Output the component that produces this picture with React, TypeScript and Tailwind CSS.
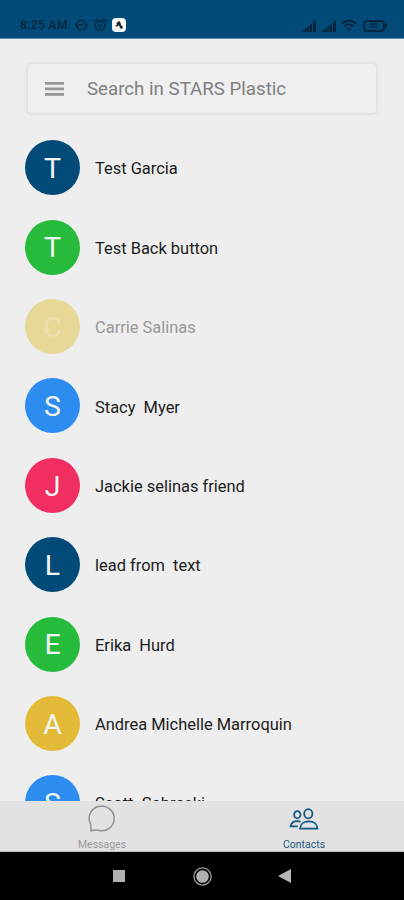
import React from "react";

interface Contact {
  name: string;
  color: string;
  disabled?: boolean;
}

const contacts: Contact[] = [
  { name: "Test Garcia", color: "bg-[#024b78]" },
  { name: "Test Back button", color: "bg-[#26bb3b]" },
  { name: "Carrie Salinas", color: "bg-[#e8d898]", disabled: true },
  { name: "Stacy  Myer", color: "bg-[#2d8cf0]" },
  { name: "Jackie selinas friend", color: "bg-[#f02e61]" },
  { name: "lead from  text", color: "bg-[#024b78]" },
  { name: "Erika  Hurd", color: "bg-[#26bb3b]" },
  { name: "Andrea Michelle Marroquin", color: "bg-[#e3ba37]" },
  { name: "Scott  Sobreski", color: "bg-[#2d8cf0]" },
];

const Signal = () => (
  <svg className="h-[12px] w-[15px]" viewBox="0 0 15 12" fill="currentColor">
    <path d="M0 12 5 8.500V12zM5.500 8 8 6v6H5.500zM8.500 5.500 11 3.500V12H8.500zM12 2.500 15 0v12h-3z" />
  </svg>
);

const StatusBar = () => (
  <div className="flex h-[39px] shrink-0 items-end border-b border-[#5d8aa5] bg-[#024b78] pr-[17px] pb-[6px] pl-[20px] text-[#07263d]">
    <span className="w-[55px] text-[12px] leading-[14px] font-medium whitespace-nowrap tracking-[0.4px]">
      8:25 AM
    </span>
    <svg className="h-[14px] w-[13px]" viewBox="0 0 13 14" fill="none" stroke="currentColor" strokeWidth="1.4">
      <circle cx="6.500" cy="7" r="4.800" />
      <path d="M0 7h3M10 7h3M4.500 7h3l1.500-2" />
    </svg>
    <svg className="ml-[5px] h-[14px] w-[14px]" viewBox="0 0 14 14" fill="none" stroke="currentColor" strokeWidth="1.4">
      <circle cx="7" cy="7.500" r="4.800" />
      <path d="M1 3.500 4 1M10 1l3 2.500M5 7l2 1.500L9 6" />
    </svg>
    <div className="ml-[5px] flex h-[14px] w-[14px] items-center justify-center rounded-[4px] bg-[#f6f8fa]">
      <svg className="h-[8px] w-[8px]" viewBox="0 0 8 8" fill="#202226">
        <path d="M1.500 2 4 0l1.500 1.500L6 4l2 2-1 2-2-1-1-3-1.500 1.500L0 5l2-1.500z" />
      </svg>
    </div>
    <div className="ml-auto flex items-center">
      <Signal />
      <div className="w-[5px]" />
      <Signal />
      <svg className="ml-[5px] h-[13px] w-[16px]" viewBox="0 0 16 13" fill="none" stroke="currentColor" strokeWidth="1.900">
        <path d="M1 4.500c4-3.800 10-3.800 14 0M3.500 7.300c2.700-2.500 6.300-2.500 9 0" />
        <path d="m5.500 9.300 2.500 2.500 2.500-2.500c-1.500-1.200-3.500-1.200-5 0z" fill="currentColor" stroke="none" />
      </svg>
      <div className="ml-[6px] flex h-[12px] w-[22px] items-center justify-center rounded-[4px] border-2 border-[#07263d] text-[8px] leading-none font-bold">
        55
      </div>
      <div className="h-[5px] w-[2px] rounded-r bg-[#07263d]" />
    </div>
  </div>
);

const SearchBar = () => (
  <div className="mx-[28px] mt-[25px] flex h-[49px] shrink-0 items-center rounded-[3px] bg-[#efefef] pl-[17px] shadow-[0_0_3px_1px_#d8d8d8]">
    <svg className="h-[14px] w-[19px]" viewBox="0 0 19 14" fill="#969696">
      <path d="M0 0h19v2.800H0zM0 5.500h19v2.800H0zM0 11h19v2.800H0z" />
    </svg>
    <span className="ml-[23px] pt-[2px] text-[18.700px] text-[#808080]">Search in STARS Plastic</span>
  </div>
);

const ContactRow = ({ contact }: { contact: Contact }) => (
  <div className="flex h-[79.4px] shrink-0 items-center pl-[25px]">
    <div
      className={`flex h-[55px] w-[55px] items-center justify-center rounded-full pt-[3px] text-[28.500px] leading-none ${contact.color} ${
        contact.disabled ? "text-[#ecdfaf]" : "text-[#f2f5f5]"
      }`}
    >
      {contact.name[0].toUpperCase()}
    </div>
    <span
      className={`ml-[15px] pt-[4px] text-[16.450px] whitespace-pre ${
        contact.disabled ? "text-[#989898]" : "text-[#1c1c1c]"
      }`}
    >
      {contact.name}
    </span>
  </div>
);

const TabBar = () => (
  <div className="flex h-[51px] shrink-0 border-b border-[#c2c2c2] bg-[#e2e2e2] text-[10.500px] leading-[12px]">
    <div className="flex w-1/2 flex-col items-center pl-[2px] text-[#9b9b9b]">
      <svg className="mt-[4px] h-[28px] w-[28px]" viewBox="0 0 28 28" fill="none" stroke="#8f8f8f" strokeWidth="1.500">
        <path d="M2.500 26.800V20.500A13 12.800 0 1 1 10 26.200q-3.500-.8-7.500.6z" />
      </svg>
      <span className="mt-[7px]">Messages</span>
    </div>
    <div className="flex w-1/2 flex-col items-center pl-[2px] text-[#1a5a85]">
      <svg className="mt-[7px] h-[23px] w-[30px]" viewBox="0 0 30 23" fill="none" stroke="#155883" strokeWidth="1.900">
        <ellipse cx="19.500" cy="6" rx="4.300" ry="4.800" />
        <ellipse cx="8" cy="7" rx="3.300" ry="3.800" />
        <path d="M11 21.500c0-4.500 3.500-7.500 9-7.500s9 3 9 7.500zM11.500 14.300C5 12.500 1.500 15 1 19.300h7.500" />
      </svg>
      <span className="mt-[9px]">Contacts</span>
    </div>
  </div>
);

const NavigationBar = () => (
  <div className="flex h-[48px] shrink-0 items-center bg-black pl-[113px]">
    <div className="h-[12px] w-[12px] bg-[#b0b0b0]" />
    <svg className="ml-[68px] h-[19px] w-[19px]" viewBox="0 0 19 19" fill="#b0b0b0">
      <circle cx="9.500" cy="9.500" r="6.300" />
      <circle cx="9.500" cy="9.500" r="8.600" fill="none" stroke="#a0a0a0" strokeWidth="1.300" />
    </svg>
    <svg className="ml-[66px] h-[14px] w-[13px]" viewBox="0 0 13 14" fill="#b8b8b8">
      <path d="M0 7 13 0v14z" />
    </svg>
  </div>
);

const App: React.FC = () => {
  return (
    <div className="flex h-[900px] w-[404px] flex-col overflow-hidden bg-[#eeeeee] font-[Roboto,sans-serif]">
      <StatusBar />
      <SearchBar />
      <div className="mt-[15px] flex min-h-0 flex-1 flex-col overflow-hidden">
        {contacts.map((contact) => (
          <ContactRow key={contact.name} contact={contact} />
        ))}
      </div>
      <TabBar />
      <NavigationBar />
    </div>
  );
};

export default App;
